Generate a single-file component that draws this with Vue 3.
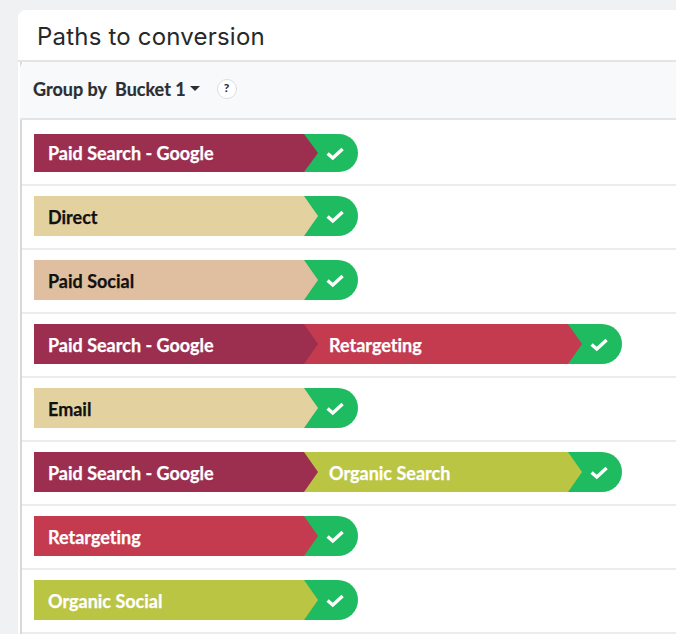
<script setup>
const colors = {
  google: '#9c2f50',
  direct: '#e3d1a0',
  social: '#e0bfa0',
  retargeting: '#c43b50',
  organic: '#bac544'
}

const paths = [
  [{ label: 'Paid Search - Google', color: colors.google }],
  [{ label: 'Direct', color: colors.direct, dark: true }],
  [{ label: 'Paid Social', color: colors.social, dark: true }],
  [
    { label: 'Paid Search - Google', color: colors.google },
    { label: 'Retargeting', color: colors.retargeting }
  ],
  [{ label: 'Email', color: colors.direct, dark: true }],
  [
    { label: 'Paid Search - Google', color: colors.google },
    { label: 'Organic Search', color: colors.organic }
  ],
  [{ label: 'Retargeting', color: colors.retargeting }],
  [{ label: 'Organic Social', color: colors.organic }]
]

const segStyle = (seg, i) => ({
  backgroundColor: seg.color,
  zIndex: 10 - i
})
</script>

<template>
  <main class="page">
    <section class="card">
      <h2 class="title">Paths to conversion</h2>
      <div class="panel">
        <div class="toolbar">
          <span class="group-label">Group by</span>
          <span class="group-value">Bucket 1</span>
          <span class="caret"></span>
          <span class="help">?</span>
        </div>
        <div class="rows">
          <div v-for="(path, n) in paths" :key="n" class="row">
            <div class="path">
              <div
                v-for="(seg, i) in path"
                :key="i"
                class="seg"
                :class="{ dark: seg.dark, next: i > 0 }"
                :style="segStyle(seg, i)"
              >
                {{ seg.label }}
              </div>
              <div class="done">
                <svg class="check" width="18" height="14" viewBox="0 0 18 14">
                  <path d="M1.6 6.4 L6.8 11 L16.6 2" fill="none" stroke="#fff" stroke-width="3.4" />
                </svg>
              </div>
            </div>
          </div>
        </div>
      </div>
    </section>
  </main>
</template>

<style>
html,
body {
  margin: 0;
  overflow: hidden;
  background: #f0f1f3;
}
</style>

<style scoped>
.page {
  width: 676px;
  height: 634px;
  overflow: hidden;
  padding: 10px 0 0 18px;
  box-sizing: border-box;
}

.card {
  width: 700px;
  background: #fff;
  border-radius: 8px 0 0 0;
}

.title {
  margin: 0;
  height: 50px;
  padding-left: 19px;
  font-family: Inter, sans-serif;
  font-weight: 400;
  font-size: 24px;
  line-height: 53px;
  letter-spacing: 0.2px;
  color: #26282b;
  border-bottom: 2px solid #e3e4e6;
}

.panel {
  margin-left: 2px;
  border-left: 2px solid #d8d8d8;
}

.toolbar {
  display: flex;
  align-items: center;
  height: 58px;
  margin-left: -2px;
  padding: 0 0 3px 13px;
  box-sizing: border-box;
  background: #f8f9fb;
  border-radius: 6px 0 0 0;
  border-bottom: 2px solid #e3e4e6;
  font-family: Lato, sans-serif;
  font-weight: 700;
  font-size: 18px;
  color: #2b2f33;
  -webkit-text-stroke: 0.2px #2b2f33;
}

.group-value {
  margin-left: 8px;
}

.caret {
  margin-left: 4px;
  margin-bottom: 1px;
  border-left: 5.5px solid transparent;
  border-right: 5.5px solid transparent;
  border-top: 5.5px solid #2b2f33;
}

.help {
  width: 18px;
  height: 18px;
  margin-left: 17px;
  border: 1px solid #dedede;
  border-radius: 50%;
  background: #fff;
  font-size: 12px;
  font-weight: 900;
  line-height: 15px;
  text-align: center;
  -webkit-text-stroke: 0;
}

.row {
  height: 52px;
  padding-top: 10px;
  border-bottom: 2px solid #ececee;
}

.row:first-child {
  padding-top: 14px;
  height: 50px;
}

.path {
  display: flex;
  height: 40px;
  margin-left: 12px;
}

.row:first-child .path {
  height: 38px;
}

.seg {
  position: relative;
  width: 284px;
  box-sizing: border-box;
  padding-left: 14px;
  font-family: Lato, sans-serif;
  font-weight: 700;
  font-size: 18px;
  font-variant-ligatures: none;
  line-height: 42px;
  color: #fff;
  -webkit-text-stroke: 0.25px currentColor;
  clip-path: polygon(0 0, calc(100% - 14px) 0, 100% 50%, calc(100% - 14px) 100%, 0 100%);
}

.row:first-child .seg {
  line-height: 38px;
}

.seg.dark {
  color: #111;
}

.seg.next {
  width: 278px;
  margin-left: -14px;
  padding-left: 25px;
}

.done {
  display: flex;
  align-items: center;
  justify-content: flex-end;
  width: 54px;
  margin-left: -14px;
  padding-right: 14px;
  box-sizing: border-box;
  background: #1fbb60;
  border-radius: 0 20px 20px 0;
}

.check {
  margin-top: 1px;
}
</style>
